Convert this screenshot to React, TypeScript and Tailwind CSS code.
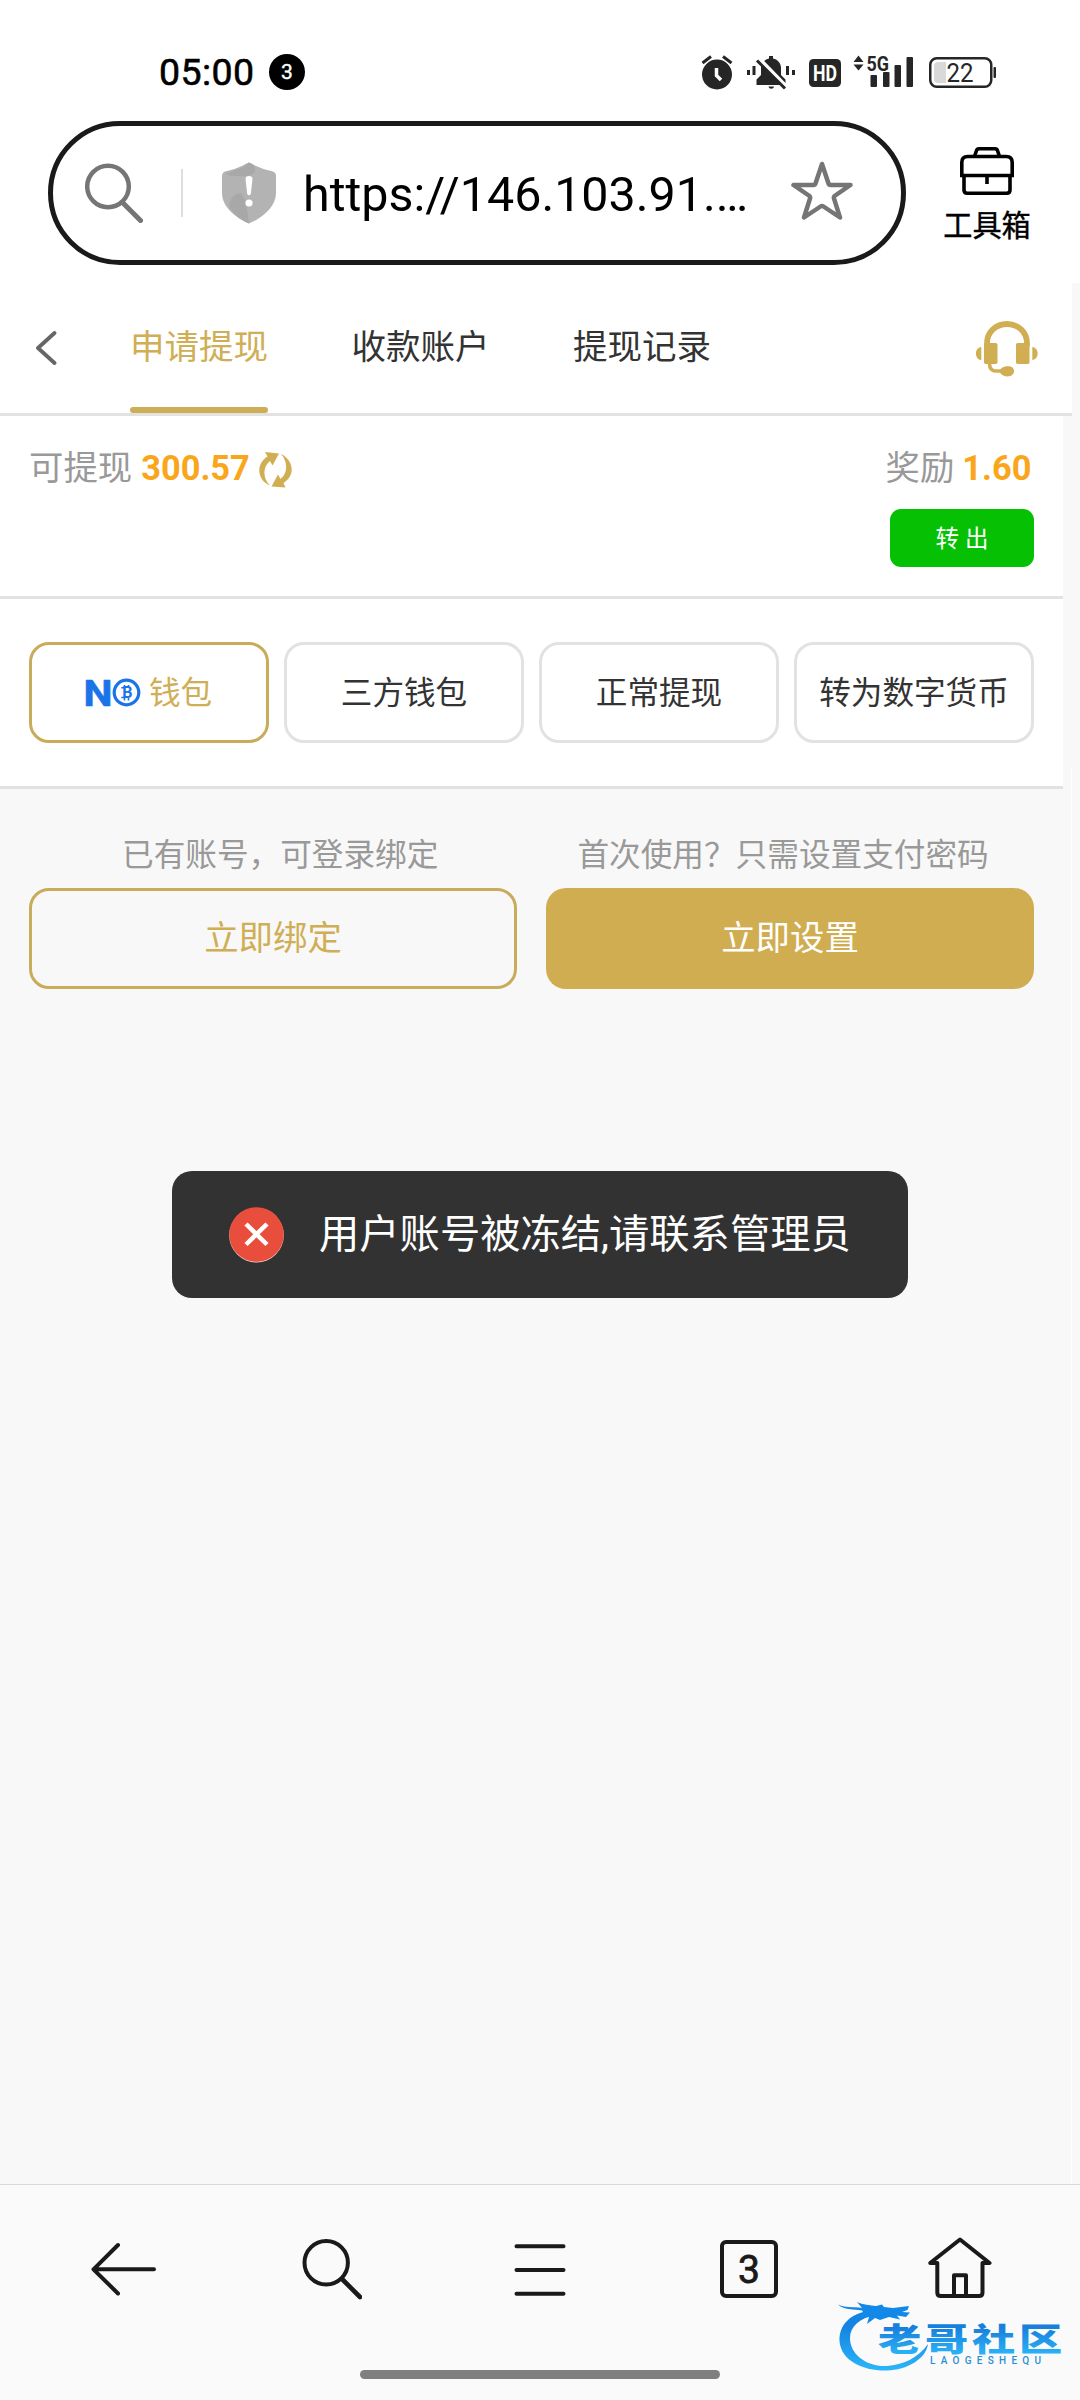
import { clsx } from "clsx";

const tabs = ["申请提现", "收款账户", "提现记录"];

const methods = [
  { id: "no", label: "钱包", logo: true },
  { id: "third", label: "三方钱包", logo: false },
  { id: "normal", label: "正常提现", logo: false },
  { id: "crypto", label: "转为数字货币", logo: false },
];

function StatusIcons() {
  return (
    <svg width="296" height="44" viewBox="701 50 296 44" fill="#262626">
      {/* alarm */}
      <circle cx="717" cy="74.5" r="15" />
      <path d="M702.5 63 l8.5 -6.5 M731.5 63 l-8.5 -6.5" stroke="#262626" strokeWidth="3" fill="none" />
      <path d="M716.5 68v7.500l4.500 4.500" stroke="#fff" strokeWidth="3.500" fill="none" />
      {/* muted bell */}
      <path d="M769 56h4v2.500c5 1 8 5 8 9.500v7l4.500 4.500v5.500h-29v-5.500l4.500 -4.500v-7c0 -4.500 3 -8.500 8 -9.500z" />
      <path d="M768.500 86.500h5.500c-.5 3 -5 3 -5.500 0z" />
      <path d="M759 58.500l28 29" stroke="#fff" strokeWidth="4" />
      <path d="M757 60.500l28 28" stroke="#262626" strokeWidth="3" />
      <path d="M747 70h3v5h-3z M752.500 66h3v9h-3z M786 66h3v9h-3z M792 70h3v5h-3z" />
      {/* HD */}
      <rect x="809" y="59" width="32" height="28" rx="4.500" />
      <text x="825" y="81" fontSize="22" fontWeight="700" textAnchor="middle" textLength="24" lengthAdjust="spacingAndGlyphs" fill="#fff">HD</text>
      {/* signal */}
      <path d="M853.500 62l5 -6.500l5 6.500z M853.500 64.500h10l-5 6z" />
      <text x="866.500" y="70.500" fontSize="21" fontWeight="700" textLength="22.500" lengthAdjust="spacingAndGlyphs">5G</text>
      <rect x="870.500" y="75" width="6.500" height="12" rx="1" />
      <rect x="883" y="72" width="6.500" height="15" rx="1" />
      <rect x="894.500" y="65" width="6.500" height="22" rx="1" />
      <rect x="906.500" y="57" width="6.500" height="30" rx="1" />
      {/* battery */}
      <rect x="930.250" y="58.250" width="61" height="28.500" rx="6.500" fill="none" stroke="#262626" strokeWidth="2.500" />
      <path d="M938 62h8v21h-8q-4 0 -4 -4v-13q0 -4 4 -4z" fill="#d9d9d9" />
      <rect x="993.500" y="67" width="2.500" height="11" rx="1" />
      <text x="960" y="81.500" fontSize="25" textAnchor="middle" textLength="27" lengthAdjust="spacingAndGlyphs">22</text>
    </svg>
  );
}

function StatusBar() {
  return (
    <div className="h-[121px] pt-[50px] pl-[159px] pr-[83px] flex items-start justify-between">
      <div className="flex items-center h-11">
        <span className="text-[37.5px] leading-9 tracking-[0.4px] text-black w-[110px] [-webkit-text-stroke:0.6px_black]">05:00</span>
        <span className="size-9 rounded-full bg-black text-white text-[21px] leading-9 text-center [-webkit-text-stroke:0.4px_white]">3</span>
      </div>
      <StatusIcons />
    </div>
  );
}

function AddressBar() {
  return (
    <div className="flex h-[162px] pl-12">
      <div className="flex items-center w-[858px] h-36 border-[5px] border-[#1a1a1a] rounded-full pl-8 shrink-0">
        <svg width="58" height="60" viewBox="0 0 58 60" fill="none" stroke="#757575" strokeWidth="4.500" strokeLinecap="round">
          <circle cx="23" cy="23.500" r="20.800" />
          <path d="M38.500 40.500L55.500 57.500" strokeWidth="5" />
        </svg>
        <div className="w-0.5 h-12 ml-[38px] bg-[#dedede]" />
        <svg className="ml-[39px]" width="54" height="62" viewBox="0 0 54 62">
          <path d="M27 .5Q30 1.500 33 3.500Q42 8 51 9.500Q54 10.500 54 14V31C54 45 40 56 27 61.500C14 56 0 45 0 31V14Q0 10.500 3 9.500Q12 8 21 3.500Q24 1.500 27 .5z" fill="#b3b3b3" />
          <path d="M13 8Q23 5 27 .5Q34 3 33 9Q30 15 20 14Q10 15 3 12z M7 44C8 36 12 32 19 31L24 40L27 61.500C17 57 11 52 7 44z" fill="#a8a8a8" />
          <path d="M23.500 17q0 -3 3.500 -3t3.500 3l-1.700 15q-1.800 2.500 -3.600 0z" fill="#fff" />
          <circle cx="27" cy="41" r="3.600" fill="#fff" />
        </svg>
        <span className="ml-[27px] w-[488px] text-[48.4px] leading-[60px] mt-[3px] text-black whitespace-nowrap">https://146.103.91.…</span>
        <svg className="-mt-1 shrink-0" width="62" height="60" viewBox="0 0 62 60" fill="none" stroke="#757575" strokeWidth="4.500" strokeLinejoin="round">
          <path d="M31 3L37.500 22.500Q38 24 39.500 24H59.500L43.500 35Q42.500 36 43 37.500L49 56.500L32.500 45.500Q31 44.500 29.500 45.500L13 56.500L19 37.500Q19.500 36 18.500 35L2.500 24H22.500Q24 24 24.500 22.500z" />
        </svg>
      </div>
      <div className="flex flex-col items-center w-[88px] ml-[37px] pt-[26px]">
        <svg width="54" height="48" viewBox="0 0 54 48" fill="none" stroke="#000" strokeWidth="3.600">
          <path d="M14.500 9.500L16.500 3.500Q17 1.800 19 1.800H35Q37 1.800 37.500 3.500L39.500 9.500" />
          <path d="M1.800 28.500V15.500Q1.800 9.500 7.800 9.500H46.200Q52.200 9.500 52.200 15.500V28.500z" />
          <path d="M4 28.500V43Q4 46.200 7.200 46.200H46.800Q50 46.200 50 43V28.500 M27 28.500V37" />
        </svg>
        <span className="mt-3 text-[29.200px] leading-[38px] text-black whitespace-nowrap [-webkit-text-stroke:0.4px_black]">工具箱</span>
      </div>
    </div>
  );
}

function Header() {
  return (
    <div className="flex items-stretch w-[1072px] h-[133px] bg-white border-b-[3px] border-[#e2e2e2] pl-[35px] pr-[34px]">
      <svg className="mt-12" width="22" height="34" viewBox="0 0 22 34" fill="none" stroke="#666" strokeWidth="3.800" strokeLinecap="round" strokeLinejoin="round">
        <path d="M19.500 2L3 17L19.500 32" />
      </svg>
      <div className="flex gap-[83.5px] ml-[73px]">
        {tabs.map((tab, i) => (
          <div
            key={tab}
            className={clsx("flex flex-col justify-between text-[34.5px] leading-[44px] pt-[42px]", i === 0 ? "text-[#cfae56]" : "text-[#333]")}
          >
            {tab}
            {i === 0 && <div className="h-1.5 rounded-full bg-[#cdad56]" />}
          </div>
        ))}
      </div>
      <svg className="ml-auto mt-[38px]" width="62" height="56" viewBox="0 0 62 56" fill="#d1ae51">
        <path d="M11 25V22.500C11 11 20 3 31 3S51 11 51 22.500V25" fill="none" stroke="#d1ae51" strokeWidth="5.800" />
        <rect x="8" y="22" width="13.500" height="21" rx="1.800" />
        <rect x="40" y="22" width="13.500" height="21" rx="1.800" />
        <path d="M5.300 26v13C-1.800 38.500 -1.800 26.500 5.300 26z M56.300 26v13C63.500 38 63.500 27 56.300 26z" />
        <path d="M13.500 42.500C13.500 48 16.500 50 20 50H28" fill="none" stroke="#d1ae51" strokeWidth="3.500" />
        <path d="M24 49C26 44.500 38 43 38 50S27 57 24 51.500z" />
      </svg>
    </div>
  );
}

function Balance() {
  return (
    <div className="flex justify-between w-[1063px] h-[183px] bg-white border-b-[3px] border-[#e2e2e2] pl-[29px] pr-[29px] pt-[30px]">
      <div className="flex items-center h-11 text-[34.4px] leading-[44px] text-[#999]">
        <span>可提现</span>
        <span className="ml-[9px] font-bold text-[#faa61a]">300.57</span>
        <svg className="ml-[9px] mt-[3px]" width="33" height="36" viewBox="0 0 33 36" fill="#d1ae51">
          <path d="M6 0L20 1.500L13.500 13.500L11 9C3.500 15 3.500 26 11 33.500C-2 28 -3.500 12 8.500 4.500z" />
          <path d="M26.500 35.500L12.500 34.500L19 22.500L21.500 27C29 21 29 10 22 2C34.500 8 37 23.500 24.500 31z" />
        </svg>
      </div>
      <div className="flex flex-col items-end">
        <div className="flex text-[34.4px] leading-[44px] text-[#999] pr-[2.5px]">
          <span>奖励</span>
          <span className="ml-2 font-bold text-[#faa61a]">1.60</span>
        </div>
        <button className="mt-[19px] w-36 h-[58px] rounded-[11px] bg-[#06c004] text-white text-[23.500px] leading-[60px] text-center">
          转 出
        </button>
      </div>
    </div>
  );
}

function NoLogo() {
  return (
    <svg className="overflow-visible" width="55" height="28" viewBox="0 0 55 28" fill="#1a73e8">
      <text x="-2.500" y="26.800" fontSize="37" fontWeight="700" textLength="29" lengthAdjust="spacingAndGlyphs" stroke="#1a73e8" strokeWidth=".6">N</text>
      <circle cx="40.500" cy="13.500" r="12.300" fill="none" stroke="#1a73e8" strokeWidth="3.200" />
      <text x="41.300" y="19.300" fontSize="16" fontWeight="700" textAnchor="middle">B</text>
      <path d="M38.500 6v2.500M42.500 6v2.500M38.500 19v2.500M42.500 19v2.500M35.300 8.700h4M35.300 18.500h4" stroke="#1a73e8" strokeWidth="1.600" />
    </svg>
  );
}

function Methods() {
  return (
    <div className="w-[1063px] h-[190px] bg-white border-b-[3px] border-[#e2e2e2] px-[29px] pt-[43px] flex gap-[15px]">
      {methods.map((m) => (
        <button
          key={m.id}
          className={clsx(
            "w-60 h-[101px] rounded-[20px] border-[3px] flex items-center justify-center text-[31.6px] leading-10",
            m.logo ? "border-[#c9ab5c] text-[#cfae56]" : "border-[#e2e2e2] text-[#333]"
          )}
        >
          {m.logo && <NoLogo />}
          <span className={clsx("pt-[2px]", m.logo && "ml-[8px]")}>{m.label}</span>
        </button>
      ))}
    </div>
  );
}

function BindPanel() {
  return (
    <div className="flex-1 w-[1063px] px-[29px] pt-[47px]">
      <div className="flex text-[31.65px] leading-10 text-[#999] pl-[93px] gap-[139px] whitespace-nowrap">
        <span>已有账号，可登录绑定</span>
        <span>首次使用？只需设置支付密码</span>
      </div>
      <div className="flex gap-[29px] mt-3 text-[34.4px]">
        <button className="w-[488px] h-[101px] rounded-[20px] border-[3px] border-[#c9ab5c] text-[#cfae56] leading-[95px]">立即绑定</button>
        <button className="w-[488px] h-[101px] rounded-[20px] bg-[#d0ad50] text-white">立即设置</button>
      </div>
    </div>
  );
}

function Toast() {
  return (
    <div className="absolute left-[172px] top-[1171px] w-[736px] h-[127px] rounded-[20px] bg-[#323232] flex items-center pl-[57px]">
      <svg width="56" height="56" viewBox="0 0 56 56">
        <circle cx="27.500" cy="28.300" r="27.300" fill="#f6d5cf" />
        <circle cx="27.500" cy="27.500" r="27.300" fill="#e94e3c" />
        <path d="M17 17L38 37.500M38 17L17 37.500" stroke="#fff" strokeWidth="4.500" />
      </svg>
      <span className="ml-[34px] text-[40.3px] leading-[52px] pt-px text-white whitespace-nowrap">用户账号被冻结,请联系管理员</span>
    </div>
  );
}

function BottomNav() {
  return (
    <div className="h-[216px] bg-[#fafafa] border-t border-[#dadada] flex flex-col items-center">
      <div className="flex w-full h-[185px] pt-[50px] pl-[91px]">
        <svg className="mt-[7px]" width="66" height="56" viewBox="0 0 66 56" fill="none" stroke="#1a1a1a" strokeWidth="4" strokeLinecap="round" strokeLinejoin="round">
          <path d="M27 3L2.500 27.300L27 51.500M2.500 27.300H63" />
        </svg>
        <svg className="ml-[145px] mt-1" width="60" height="62" viewBox="0 0 60 62" fill="none" stroke="#1a1a1a" strokeWidth="4" strokeLinecap="round">
          <circle cx="24.200" cy="23.700" r="21.700" />
          <path d="M40.500 40.500L58 58" strokeWidth="4.600" />
        </svg>
        <svg className="ml-[152px] mt-[7px]" width="52" height="56" viewBox="0 0 52 56" stroke="#1a1a1a" strokeWidth="4" strokeLinecap="round">
          <path d="M2.500 4.300H49.500M2.500 28H49.500M2.500 51.700H49.500" />
        </svg>
        <div className="ml-[154px] mt-[5px] size-[58px] rounded-md border-4 border-[#1a1a1a] text-[#1a1a1a] text-[39px] leading-[53px] text-center [-webkit-text-stroke:0.8px_#1a1a1a]">
          3
        </div>
        <svg className="ml-[150px] mt-0.5" width="64" height="62" viewBox="0 0 64 62" fill="none" stroke="#1a1a1a" strokeWidth="4" strokeLinecap="round" strokeLinejoin="round">
          <path d="M9.300 26H2.200L32 2.500L61.500 26H54.500V55.500Q54.500 59 51 59H12.800Q9.300 59 9.300 55.500z" />
          <path d="M26 59V38.300H38V59" />
        </svg>
      </div>
      <div className="w-[360px] h-[9px] rounded-full bg-[#7f7f7f]" />
    </div>
  );
}

function Watermark() {
  return (
    <svg className="absolute left-[836px] top-[2298px]" width="230" height="78" viewBox="836 2298 230 78">
      <defs>
        <linearGradient id="wm" gradientUnits="userSpaceOnUse" x1="0" y1="2304" x2="0" y2="2370">
          <stop offset="0" stopColor="#0a86e8" />
          <stop offset=".35" stopColor="#1683e2" />
          <stop offset="1" stopColor="#2bb5fa" />
        </linearGradient>
        <linearGradient id="wmText" x1="0" y1="0" x2="0" y2="1">
          <stop offset=".3" stopColor="#187fdc" />
          <stop offset=".85" stopColor="#2ab0f5" />
        </linearGradient>
      </defs>
      {/* tail */}
      <path
        d="M868 2311C850 2314 839 2325 839.500 2341C841 2361 863 2371 887 2370.500C907 2370 926 2359 928 2344C918 2358 903 2365 887 2366C866 2367 850 2354 850 2338C850 2327 859 2318 876 2315z"
        fill="url(#wm)"
      />
      {/* head and whiskers */}
      <path
        d="M838 2304.500C844 2308 854 2306.500 862 2308L857 2302C863 2305 870 2305 876 2306L882 2304.500L884 2307L893 2308L909 2306L907.500 2310L902 2312L910 2312.500L906 2317L897 2315.500L900 2319.500L889 2317L880 2320L875 2318L867 2324L869 2317L858 2317C862 2315 864 2312 862 2310.500C854 2309 843 2310 838 2304.500z"
        fill="#1289e9"
      />
      <g transform="translate(878 2350.500) scale(1.2 .88)">
        <text x="0" y="0" fontSize="36" fontWeight="900" letterSpacing="3.200" fontFamily="'Noto Sans CJK SC', sans-serif" fill="url(#wmText)">老哥社区</text>
      </g>
      <text x="930" y="2364" fontSize="10" fontWeight="500" textLength="111" fill="#2b8fd4">LAOGESHEQU</text>
    </svg>
  );
}

export default function App() {
  return (
    <div className="relative flex flex-col w-[1080px] h-[2400px] overflow-hidden bg-white font-['Roboto','Noto_Sans_CJK_SC',sans-serif]">
      <StatusBar />
      <AddressBar />
      <main className="relative flex-1 flex flex-col bg-[#f8f8f8]">
        <Header />
        <Balance />
        <Methods />
        <BindPanel />
        <div className="absolute top-[484px] bottom-0 right-2 w-px bg-white" />
      </main>
      <BottomNav />
      <Toast />
      <Watermark />
    </div>
  );
}
